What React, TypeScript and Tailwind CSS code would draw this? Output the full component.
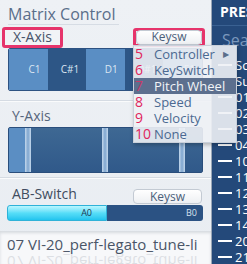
import React from 'react';

const cells = [
  { label: 'C1', dark: false },
  { label: 'C#1', dark: true },
  { label: 'D1', dark: false },
  { label: 'D#1', dark: true },
  { label: 'E1', dark: false },
];

const menuItems = [
  { n: '5', label: 'Controller', sub: true },
  { n: '6', label: 'KeySwitch' },
  { n: '7', label: 'Pitch Wheel', active: true },
  { n: '8', label: 'Speed' },
  { n: '9', label: 'Velocity' },
  { n: '10', label: 'None' },
];

const presets = ['Scenes', 'Sub', '01', '02', '03', '04', '10', '11', '12', '13', '14', '20', '21'];

const KeyswButton: React.FC = () => (
  <div className="h-[15px] w-full rounded-[4px] border border-[#c3cad3] bg-gradient-to-b from-white to-[#eef0f3] flex items-center justify-center text-[12px] leading-none text-[#4b5f7a]">
    Keysw
  </div>
);

const App: React.FC = () => {
  return (
    <div className="relative w-[247px] h-[264px] overflow-hidden flex font-['Open_Sans','Noto_Sans',sans-serif] select-none">
      {/* left: matrix control */}
      <div className="w-[211px] h-full flex flex-col bg-gradient-to-b from-[#eef1f5] to-[#e9edf2]">
        <div className="h-[26px] pl-[8px] pt-[2px]">
          <span className="inline-block text-[16px] leading-[20px] text-[#5a6e8a] border-b border-[#d6dce4] pr-[3px]">Matrix Control</span>
        </div>

        {/* X-Axis */}
        <div className="h-[22px] flex items-center justify-between pl-[2px] pr-[6px]">
          <div className="h-[21px] px-[8px] flex items-center border-[3px] border-[#e6346b] rounded-[3px] bg-[#f1f3f6] text-[14px] leading-none text-[#47536a]">
            X-Axis
          </div>
          <div className="w-[72px] h-[19px] border-[3px] border-[#e6346b] rounded-[3px] flex items-center">
            <KeyswButton />
          </div>
        </div>
        <div className="mx-[8px] h-[43px] flex border border-[#2d5282] rounded-[2px] overflow-hidden">
          {cells.map((c) => (
            <div
              key={c.label}
              className={`flex-1 flex items-center justify-end pr-[7px] text-[10px] text-[#dce6f2] ${c.dark ? 'bg-[#2d5686]' : 'bg-[#5a8ec4]'}`}
            >
              {c.label}
            </div>
          ))}
        </div>

        {/* Y-Axis */}
        <div className="mt-[9px] border-t border-[#d5dbe3] shadow-[inset_0_1px_0_#fafbfc] h-[26px] pl-[12px] pt-[6px] text-[14px] leading-[18px] text-[#56667c]">
          Y-Axis
        </div>
        <div className="mx-[8px] mt-[1px] h-[46px] flex border border-[#2a4e7c] rounded-[2px] overflow-hidden bg-gradient-to-b from-[#3e6893] to-[#30598a]">
          <div className="w-[16px] bg-[#5b8ec3]"></div>
          {[0, 1, 2].map((i) => (
            <React.Fragment key={i}>
              <div className="w-[6px] bg-gradient-to-r from-[#c4d8ec] via-[#7fa6cf] to-[#c4d8ec]"></div>
              <div className={i < 2 ? 'w-[71px]' : 'flex-1'}></div>
            </React.Fragment>
          ))}
        </div>

        {/* AB-Switch */}
        <div className="mt-[4px] border-t border-[#d5dbe3] shadow-[inset_0_1px_0_#fafbfc] h-[28px] flex items-end justify-between pl-[12px] pr-[9px]">
          <span className="text-[14px] leading-[18px] mb-[2px] text-[#404c5e]">AB-Switch</span>
          <div className="w-[69px] mb-[1px]">
            <KeyswButton />
          </div>
        </div>
        <div className="mx-[7px] h-[16px] flex mr-[8px]">
          <div className="w-[100px] rounded-l-[3px] border border-[#2fb2d8] bg-gradient-to-b from-[#b8f6ff] via-[#56def8] to-[#1fc4ee] flex items-center justify-end pr-[14px] text-[9px] text-[#1f3550]">
            A0
          </div>
          <div className="flex-1 rounded-r-[3px] bg-[#2b5283] flex items-center justify-end pr-[6px] text-[9px] text-[#d7e2ef]">
            B0
          </div>
        </div>

        {/* preset name */}
        <div className="mt-[10px] flex-1 bg-[#f7f8fa] shadow-[inset_0_2px_3px_rgba(120,130,145,0.25)] pl-[7px] pt-[4px] overflow-hidden">
          <div className="text-[15px] leading-[18px] text-[#4a5568] whitespace-nowrap">07 VI-20_perf-legato_tune-li</div>
          <div className="text-[15px] leading-[18px] text-[#4a5568] whitespace-nowrap -scale-y-100 opacity-15">07 VI-20_perf-legato_tune-li</div>
        </div>
      </div>

      {/* right: presets */}
      <div className="flex-1 h-full bg-[#24497a] border-l border-[#9aa6b6] overflow-hidden">
        <div className="h-[26px] pl-[8px] pt-[3px] border-b border-[#3a6192] text-[14px] leading-[18px] font-bold text-white whitespace-nowrap">
          PRESETS
        </div>
        <div className="h-[31px] pl-[10px] pt-[4px] text-[16px] leading-[20px] text-[#7b98bd] whitespace-nowrap">Search</div>
        <div className="flex flex-col">
          {presets.map((p) => (
            <div key={p} className="h-[16px] flex items-center whitespace-nowrap">
              <div className="ml-[6px] w-[14px] h-[2px] bg-white shrink-0"></div>
              <span className="ml-[3px] text-[13px] leading-none text-white">{p}</span>
            </div>
          ))}
        </div>
      </div>

      {/* dropdown menu */}
      <div className="absolute left-[133px] top-[45px] w-[104px] bg-[#eef1f5]/90 border border-[#c9d0da] shadow-[1px_2px_4px_rgba(0,0,0,0.25)]">
        {menuItems.map((m) => (
          <div
            key={m.n}
            className={`h-[16px] flex items-center ${m.active ? 'bg-[#5c6f8e]' : ''}`}
          >
            <span className={`w-[20px] pl-[1px] text-[14px] leading-none ${m.active ? 'text-[#c8396a]' : 'text-[#e0255c]'}`}>{m.n}</span>
            <span className={`flex-1 text-[13px] leading-none ${m.active ? 'text-[#f2f4f7]' : 'text-[#4b6991]'}`}>{m.label}</span>
            {m.sub && <span className="mr-[7px] text-[8px] text-[#5a6e8a]">▶</span>}
          </div>
        ))}
      </div>
    </div>
  );
};

export default App;
